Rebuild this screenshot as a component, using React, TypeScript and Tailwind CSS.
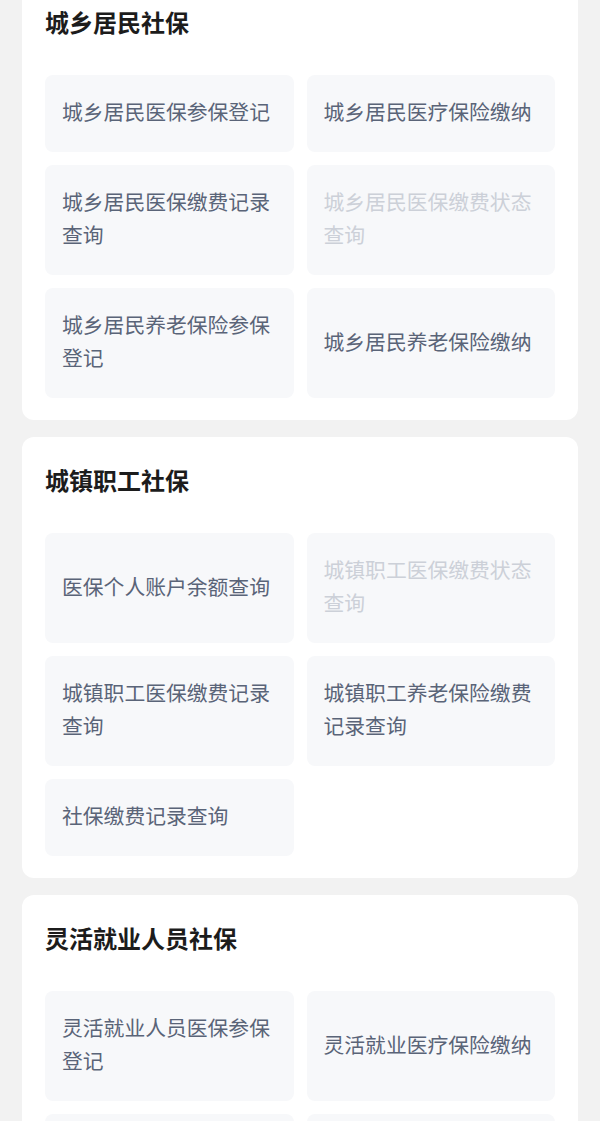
import React from "react";

type Item = { label: string; disabled?: boolean };
type Section = { title: string; items: Item[] };

const sections: Section[] = [
  {
    title: "城乡居民社保",
    items: [
      { label: "城乡居民医保参保登记" },
      { label: "城乡居民医疗保险缴纳" },
      { label: "城乡居民医保缴费记录查询" },
      { label: "城乡居民医保缴费状态查询", disabled: true },
      { label: "城乡居民养老保险参保登记" },
      { label: "城乡居民养老保险缴纳" },
    ],
  },
  {
    title: "城镇职工社保",
    items: [
      { label: "医保个人账户余额查询" },
      { label: "城镇职工医保缴费状态查询", disabled: true },
      { label: "城镇职工医保缴费记录查询" },
      { label: "城镇职工养老保险缴费记录查询" },
      { label: "社保缴费记录查询" },
    ],
  },
  {
    title: "灵活就业人员社保",
    items: [
      { label: "灵活就业人员医保参保登记" },
      { label: "灵活就业医疗保险缴纳" },
      { label: "灵活就业人员养老保险参保登记" },
      { label: "灵活就业养老保险缴纳" },
    ],
  },
];

export default function App() {
  return (
    <div
      className="min-h-screen bg-[#f2f2f2] px-[22px] pb-6"
      style={{ fontFamily: '"Noto Sans CJK SC", "Noto Sans", sans-serif' }}
    >
      <div className="-mt-[21px] flex flex-col gap-[17px]">
        {sections.map((s) => (
          <div key={s.title} className="rounded-[12px] bg-white px-[23px] pt-[28px] pb-[22px]">
            <h2 className="text-[24px] leading-[30px] font-bold text-[#1c1c1c]">{s.title}</h2>
            <div className="mt-[38px] grid grid-cols-2 gap-x-[13px] gap-y-[13px]">
              {s.items.map((it) => (
                <div
                  key={it.label}
                  className="flex items-center rounded-[8px] bg-[#f7f8fa] px-[17px] pt-[20px] pb-[24px]"
                >
                  <span
                    className={
                      "text-[20.8px] leading-[33px] " +
                      (it.disabled ? "text-[#ccd0d8]" : "text-[#5a6478]")
                    }
                  >
                    {it.label}
                  </span>
                </div>
              ))}
            </div>
          </div>
        ))}
      </div>
    </div>
  );
}
